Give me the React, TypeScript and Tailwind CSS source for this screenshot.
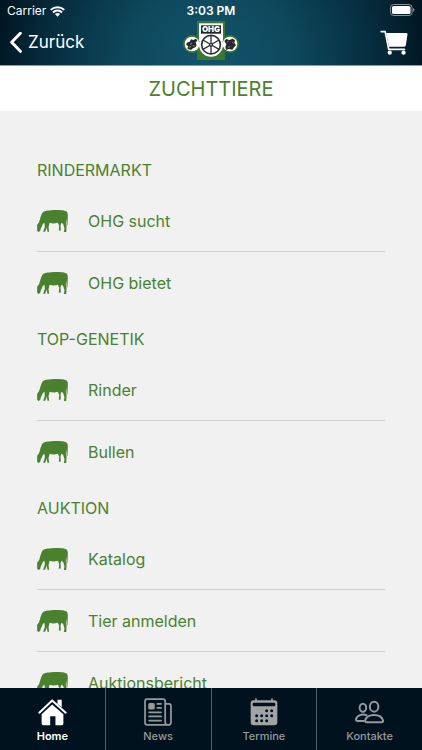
import type { ReactNode } from "react";

const sections = [
  { title: "RINDERMARKT", items: ["OHG sucht", "OHG bietet"] },
  { title: "TOP-GENETIK", items: ["Rinder", "Bullen"] },
  { title: "AUKTION", items: ["Katalog", "Tier anmelden", "Auktionsbericht"] },
];

const CowIcon = () => (
  <svg viewBox="0 0 92 66" className="h-[22px] w-[31px] shrink-0" fill="#4a812e" aria-hidden="true">
    <path d="M14 11C18 3 28 2 42 1C56 0 72 0 82 2C90 3 92 8 92 16L91 44L89 47L87 26L86 37C86 43 89 47 88 54L87 66H80L82 55L78 42L73 38L70 46L71 61L65 63L66 47L62 38C54 41 44 41 37 38L33 47L28 54L24 65H18L23 50L22 38L17 42L14 49L11 55L9 63L4 66L0 62L0 44L6 36L10 22Z" />
    <path d="M30 40L37 40L34 51L36 65H31L28 51Z" />
  </svg>
);

const WifiIcon = () => (
  <svg viewBox="0 0 46 34" className="h-[11px] w-[15px]" fill="none" stroke="white" strokeWidth="6" aria-hidden="true">
    <path d="M2 12C14 1 32 1 44 12" />
    <path d="M9 20C17 12 29 12 37 20" />
    <path d="M23 33L15 25Q23 19 31 25Z" fill="white" stroke="none" />
  </svg>
);

const BatteryIcon = () => (
  <svg viewBox="0 0 25 12" className="h-3 w-[25px]" aria-hidden="true">
    <rect x="0.5" y="0.5" width="21.5" height="11" rx="3" fill="none" stroke="#879198" />
    <rect x="2" y="2" width="18.5" height="8" rx="1.5" fill="white" />
    <path d="M23 4Q26 6 23 8Z" fill="#879198" />
  </svg>
);

const CartIcon = () => (
  <svg viewBox="0 0 84 76" className="h-[25px] w-7" aria-hidden="true">
    <path d="M3 5H15L26 59H74" fill="none" stroke="white" strokeWidth="5" strokeLinecap="round" strokeLinejoin="round" />
    <path d="M18 9H80Q84 9 83 14L78 46Q77 51 72 51H27Z" fill="white" />
    <circle cx="29" cy="69" r="6.5" fill="white" />
    <circle cx="71" cy="69" r="6.5" fill="white" />
  </svg>
);

const Logo = () => (
  <svg viewBox="0 0 168 117" className="h-[39px] w-14" role="img" aria-label="OHG">
    <rect x="42" width="84" height="117" fill="#397630" />
    <circle cx="27" cy="69" r="27" fill="#397630" />
    <circle cx="141" cy="69" r="27" fill="#397630" />
    <path d="M48 7H120V60H48Z" fill="white" />
    <circle cx="27" cy="69" r="22" fill="white" />
    <circle cx="141" cy="69" r="22" fill="white" />
    <circle cx="84" cy="71" r="36" fill="white" />
    <rect x="54" y="13" width="60" height="25" fill="#222328" />
    <text x="84" y="34" textAnchor="middle" fill="white" fontSize="24" fontWeight="900" fontFamily="Inter, sans-serif">
      OHG
    </text>
    <circle cx="84" cy="71" r="28" fill="none" stroke="#303237" strokeWidth="5" />
    <path d="M84 43V99M60 57L108 85M60 85L108 57" stroke="#303237" strokeWidth="4" />
    <circle cx="84" cy="71" r="6" fill="#303237" />
    <circle cx="84" cy="71" r="2" fill="white" />
    <path d="M11 65L20 62L24 55L31 57L38 53L43 58L38 65L41 73L37 79L30 82L24 87L13 83L16 75L10 73Z" fill="#26282b" />
    <path d="M21 70L27 66M30 72L34 77M19 79L25 76" stroke="#c2c4c5" strokeWidth="2" />
    <path d="M124 60L130 54L139 57L149 53L156 58L154 65L159 73L153 79L148 86L137 84L130 87L127 79L130 70Z" fill="#26282b" />
    <path d="M132 63L137 61M134 79L142 77M147 63L151 67" stroke="#a2a6a8" strokeWidth="2" />
  </svg>
);

const HomeIcon = () => (
  <svg viewBox="0 0 88 84" className="h-7 w-[29px]" fill="white" aria-hidden="true">
    <path d="M4 44L43 7L84 44" fill="none" stroke="white" strokeWidth="6" strokeLinecap="round" strokeLinejoin="round" />
    <path d="M59 5H72V28L59 17Z" />
    <path d="M11 49L43 19L77 49V77Q77 82 72 82H53V55H37V82H16Q11 82 11 77Z" />
  </svg>
);

const NewsIcon = () => (
  <svg viewBox="0 0 82 82" className="size-7" fill="none" stroke="#979a9d" strokeWidth="5" strokeLinecap="round" strokeLinejoin="round" aria-hidden="true">
    <path d="M72 79H10Q3 79 3 72V9Q3 3 9 3H56Q62 3 62 9V70Q62 79 71 79Q79 79 79 70V23Q79 17 73 17H63" />
    <rect x="15" y="17" width="14" height="14" rx="2" fill="#979a9d" />
    <path d="M39 17H50M39 29H50M15 42H50M15 54H50M15 66H50" />
  </svg>
);

const CalendarIcon = () => (
  <svg viewBox="0 0 84 84" className="size-7" aria-hidden="true">
    <path d="M18 3V12M66 3V12" stroke="#a2a3a4" strokeWidth="5" strokeLinecap="round" />
    <path d="M11 7H73Q82 7 82 16V73Q82 82 73 82H11Q2 82 2 73V16Q2 7 11 7Z" fill="#a2a3a4" />
    <rect x="8" y="14" width="68" height="11" rx="4" fill="#00121d" />
    <g fill="#00121d">
      <circle cx="50" cy="38" r="4.5" />
      <circle cx="65" cy="38" r="4.5" />
      <circle cx="20" cy="53" r="4.5" />
      <circle cx="35" cy="53" r="4.5" />
      <circle cx="50" cy="53" r="4.5" />
      <circle cx="65" cy="53" r="4.5" />
      <circle cx="20" cy="68" r="4.5" />
      <circle cx="35" cy="68" r="4.5" />
      <circle cx="50" cy="68" r="4.5" />
    </g>
  </svg>
);

const ContactsIcon = () => (
  <svg viewBox="0 0 88 84" className="h-7 w-[29px]" fill="none" stroke="#979a9d" strokeWidth="6" strokeLinejoin="round" aria-hidden="true">
    <ellipse cx="24" cy="29" rx="10" ry="12" />
    <ellipse cx="58" cy="26" rx="13" ry="15" />
    <path d="M37 53C23 45 4 53 3 65Q3 69 8 69H29" />
    <path d="M31 68C35 46 79 45 85 68Q86 73 80 73H36Q30 73 31 68Z" />
  </svg>
);

interface TabProps {
  label: string;
  icon: ReactNode;
  active?: boolean;
}

const Tab = ({ label, icon, active }: TabProps) => (
  <a
    href="#"
    aria-current={active ? "page" : undefined}
    className={`flex flex-1 flex-col items-center border-r border-[#52616a] pt-2.5 text-[11px] leading-4 last:border-r-0 ${
      active ? "font-semibold text-white" : "font-medium text-[#979a9d]"
    }`}
  >
    {icon}
    <span className="mt-0.5">{label}</span>
  </a>
);

export default function App() {
  return (
    <div className="flex h-screen flex-col overflow-hidden bg-[#f1f1f1] font-['Inter',sans-serif] text-[#4a812e]">
      <header className="shrink-0 border-b border-[#8d9ba3] bg-[radial-gradient(circle_at_50%_100%,#11556b_0%,#0e485d_38%,#062c3d_75%,#001420_100%)] text-white">
        <div className="grid h-5 grid-cols-3 items-center px-[7px] text-[12px]">
          <div className="flex items-center gap-1 pt-0.5">
            Carrier
            <WifiIcon />
          </div>
          <div className="pt-0.5 text-center font-semibold">3:03 PM</div>
          <div className="flex justify-end">
            <BatteryIcon />
          </div>
        </div>
        <div className="grid h-[45px] grid-cols-3 items-center px-2.5">
          <button className="flex items-center gap-1.5 text-[17px]">
            <svg viewBox="0 0 36 63" className="h-[21px] w-3" fill="none" stroke="white" strokeWidth="9" strokeLinecap="round" strokeLinejoin="round" aria-hidden="true">
              <path d="M31 4L5 31L31 58" />
            </svg>
            Zurück
          </button>
          <div className="flex justify-center pb-1">
            <Logo />
          </div>
          <button aria-label="Warenkorb" className="justify-self-end pr-1">
            <CartIcon />
          </button>
        </div>
      </header>

      <h1 className="flex h-[45px] shrink-0 items-center justify-center bg-white text-[20px]">ZUCHTTIERE</h1>

      <main className="min-h-0 flex-1 overflow-hidden px-[37px] pt-[34px]">
        {sections.map((section) => (
          <section key={section.title}>
            <h2 className="pt-[13px] pb-2 text-[16px] leading-6">{section.title}</h2>
            <ul>
              {section.items.map((item) => (
                <li key={item} className="border-b border-[#d0d0d0] last:border-transparent">
                  <a href="#" className="flex h-[61px] items-center gap-5 text-[16px]">
                    <CowIcon />
                    {item}
                  </a>
                </li>
              ))}
            </ul>
          </section>
        ))}
      </main>

      <nav className="flex h-[62px] shrink-0 bg-[#00121d]">
        <Tab label="Home" icon={<HomeIcon />} active />
        <Tab label="News" icon={<NewsIcon />} />
        <Tab label="Termine" icon={<CalendarIcon />} />
        <Tab label="Kontakte" icon={<ContactsIcon />} />
      </nav>
    </div>
  );
}
